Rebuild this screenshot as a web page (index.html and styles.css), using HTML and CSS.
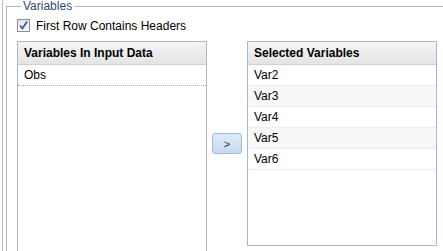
FILE: index.html
```html
<!DOCTYPE html>
<html lang="en">
<head>
    <meta charset="UTF-8">
    <title>Variables</title>
    <link rel="stylesheet" href="styles.css">
</head>
<body>

<div class="frame">
    <fieldset class="group">
        <legend>Variables</legend>

        <label class="check-row">
            <span class="checkbox">
                <svg width="11" height="11" viewBox="0 0 11 11"><path d="M2 5.5 L4.5 8.5 L9 1.5" fill="none" stroke="#3c5c9c" stroke-width="1.8"/></svg>
            </span>
            First Row Contains Headers
        </label>

        <div class="lists">
            <div class="list list-input">
                <div class="list-header">Variables In Input Data</div>
                <ul class="rows dotted">
                    <li>Obs</li>
                </ul>
            </div>

            <div class="mover">
                <button class="move-button">&gt;</button>
            </div>

            <div class="list list-selected">
                <div class="list-header">Selected Variables</div>
                <ul class="rows striped">
                    <li>Var2</li>
                    <li>Var3</li>
                    <li>Var4</li>
                    <li>Var5</li>
                    <li>Var6</li>
                </ul>
            </div>
        </div>
    </fieldset>
</div>

</body>
</html>
```

FILE: styles.css
```css
html, body {
    margin: 0;
    height: 251px;
    overflow: hidden;
    background: #ffffff;
}

body {
    font-family: "Liberation Sans", Arial, sans-serif;
    font-size: 12px;
    color: #000;
}

.frame {
    margin-left: 2px;
    height: 251px;
    border-left: 1px solid #a9bfd6;
    padding-left: 3px;
    overflow: hidden;
}

.group {
    margin: 0;
    padding: 0 0 0 10px;
    border: 1px solid #b5b8c8;
    border-right: none;
    border-bottom: none;
    height: 260px;
}

.group legend {
    margin-left: 4px;
    padding: 0 2px;
    font-size: 12px;
    line-height: 12px;
    color: #2f4a73;
}

.check-row {
    display: flex;
    align-items: center;
    gap: 6px;
    margin-top: 7px;
    height: 13px;
    color: #000;
}

.checkbox {
    box-sizing: border-box;
    width: 13px;
    height: 13px;
    border: 1px solid #8f8f9a;
    background: linear-gradient(#e2e4ea, #fbfbfb);
    display: flex;
    align-items: center;
    justify-content: center;
}

.lists {
    display: flex;
    align-items: flex-start;
    margin-top: 9px;
}

.list {
    box-sizing: border-box;
    width: 190px;
    border: 1px solid #a3b9d2;
    background: #fff;
}

.list-input {
    height: 230px;
}

.list-selected {
    height: 205px;
}

.list-header {
    height: 22px;
    line-height: 22px;
    padding-left: 6px;
    font-weight: bold;
    background: linear-gradient(#f5f5f5, #e4e4e4);
    border-bottom: 1px solid #cfcfcf;
}

.rows {
    list-style: none;
    margin: 0;
    padding: 0;
}

.rows li {
    height: 20px;
    line-height: 20px;
    padding-left: 6px;
}

.dotted li {
    border-bottom: 1px dotted #b0b0b0;
}

.striped li {
    border-bottom: 1px solid #ededed;
}

.striped li:nth-child(even) {
    background: #f8f8f8;
}

.mover {
    width: 40px;
    height: 205px;
    display: flex;
    align-items: center;
    justify-content: center;
}

.move-button {
    box-sizing: border-box;
    width: 30px;
    height: 21px;
    padding: 0;
    font-family: "Liberation Sans", Arial, sans-serif;
    font-size: 11px;
    color: #333;
    background: linear-gradient(#dfeaf7, #c6daf0);
    border: 1px solid #9dbbe0;
    border-radius: 3px;
}
```
